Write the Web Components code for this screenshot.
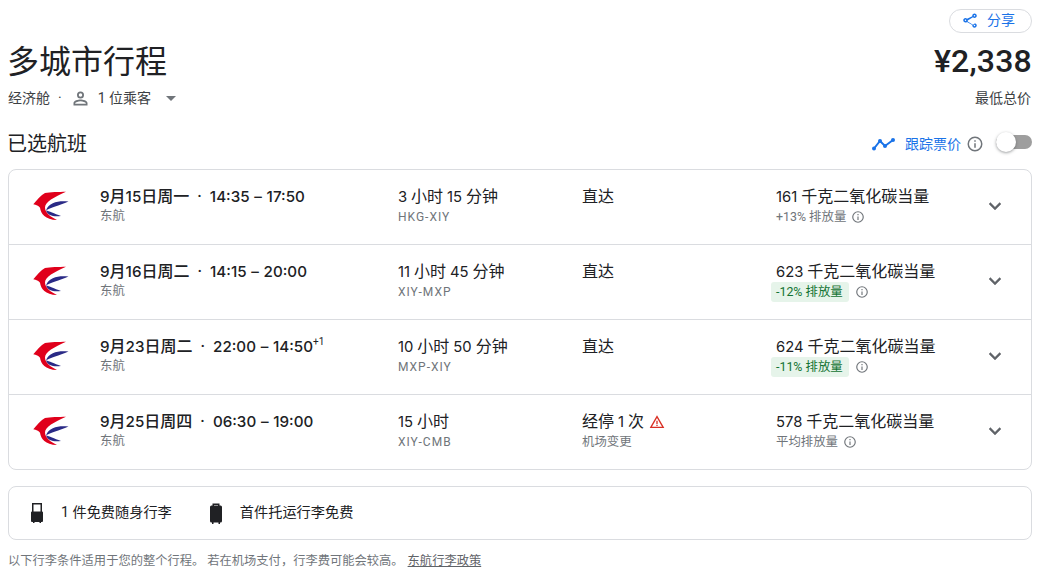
<!DOCTYPE html>
<html lang="zh-CN">
<head>
<meta charset="utf-8">
<title>多城市行程</title>
<style>
html,body{margin:0;padding:0;background:#fff;overflow:hidden}
body{font-family:Roboto,"Noto Sans CJK SC",sans-serif;color:#202124}
</style>
</head>
<body>
<trip-page>
  <trip-header></trip-header>
  <section-bar></section-bar>
  <flight-card>
    <flight-row date="9月15日周一" times="14:35 – 17:50" dur="3 小时 15 分钟" route="HKG-XIY" stops="直达" co2="161 千克二氧化碳当量" em="+13% 排放量"></flight-row>
    <flight-row date="9月16日周二" times="14:15 – 20:00" dur="11 小时 45 分钟" route="XIY-MXP" stops="直达" co2="623 千克二氧化碳当量" em="-12% 排放量" low></flight-row>
    <flight-row date="9月23日周二" times="22:00 – 14:50" plus="+1" dur="10 小时 50 分钟" route="MXP-XIY" stops="直达" co2="624 千克二氧化碳当量" em="-11% 排放量" low></flight-row>
    <flight-row date="9月25日周四" times="06:30 – 19:00" dur="15 小时" route="XIY-CMB" stops="经停 1 次" warn="机场变更" co2="578 千克二氧化碳当量" em="平均排放量"></flight-row>
  </flight-card>
  <baggage-box></baggage-box>
  <baggage-note></baggage-note>
</trip-page>
<script>
const INFO = s => `<svg width="${s}" height="${s}" viewBox="0 0 24 24" fill="#70757a"><path d="M11 7h2v2h-2zm0 4h2v6h-2zm1-9a10 10 0 1 0 0 20 10 10 0 0 0 0-20zm0 18a8 8 0 1 1 0-16 8 8 0 0 1 0 16z"/></svg>`;
const LOGO = `<svg width="36" height="30" viewBox="0 0 36 30">
<path fill="#e0001b" d="M33 .7C26 .9 17 1 12 2 8 4 4 9 .3 13.300 3 14 6 15 7 16.700 8 23 12 28.500 24 29 18 26 12 22 12 16.500 12 11 21 6 33 .7Z"/>
<path fill="#2a2a86" d="M35.500 10.500C27 9.500 16 10.500 13 19.500 17 17 26 14.500 35.500 10.500Z"/>
<path fill="#2a2a86" d="M13 19.500C16 20 21 22.500 28 25 21 26 15 25 13 19.500Z"/>
</svg>`;
const L = s => s.replace(/[0-9:+\-–%]+/g, m => `<span class="l">${m}</span>`);
function def(name, css, html){
  customElements.define(name, class extends HTMLElement{
    connectedCallback(){
      if(this.shadowRoot) return;
      this.attachShadow({mode:'open'}).innerHTML = `<style>${css}</style>` + (typeof html==='function'?html(this):html);
    }
  });
}
def('trip-page', `:host{display:block;width:1024px;padding:0 13px 0 8px;}`, `<slot></slot>`);
def('trip-header', `
:host{display:block;height:125px}
.wrap{display:flex;justify-content:space-between;height:100%}
.left{display:flex;flex-direction:column;padding-top:40px;margin-left:-1px}
h1{margin:0;font-weight:400;font-size:32px;line-height:44px;color:#202124}
.sub{display:flex;align-items:center;font-size:14px;line-height:20px;color:#3c4043;margin:4px 0 0 1px;height:20px}
.dot{margin:0 6px 0 8px}
.person{margin:0 7px 0 2px;display:block}
.arrow{margin-left:15px;width:0;height:0;border-left:5px solid transparent;border-right:5px solid transparent;border-top:5px solid #70757a;margin-top:1px}
.right{display:flex;flex-direction:column;align-items:flex-end;padding-top:9px}
.share{box-sizing:border-box;width:83px;height:24px;border:1px solid #dadce0;border-radius:12px;display:flex;align-items:center;color:#1a73e8;font-size:14px;line-height:20px;padding:0 0 2px 11px}
.share svg{margin-top:2px}
.share span{margin-left:8px}
.price{font-size:32px;line-height:38px;font-weight:500;margin-top:9px;color:#202124;letter-spacing:.2px}
.low{font-size:14px;line-height:20px;color:#3c4043;margin:8px 1px 0 0}
`, `<div class="wrap"><div class="left"><h1>多城市行程</h1>
<div class="sub"><span>经济舱</span><span class="dot">·</span>
<svg class="person" width="21" height="21" viewBox="0 0 24 24" fill="#70757a"><path d="M12 4a4 4 0 1 0 0 8 4 4 0 0 0 0-8zm0 6a2 2 0 1 1 0-4 2 2 0 0 1 0 4zm0 3c-2.700 0-8 1.300-8 4v3h16v-3c0-2.700-5.300-4-8-4zm6 5H6v-.990C6.200 16.300 9.300 15 12 15s5.800 1.300 6 2.010V18z"/></svg>
<span>1 位乘客</span><span class="arrow"></span></div></div>
<div class="right"><div class="share">
<svg width="18" height="18" viewBox="0 0 24 24" fill="#1a73e8"><path d="M18 16.100c-.8 0-1.500.3-2 .8l-7.100-4.200c.1-.2.100-.5.100-.7s0-.5-.1-.7L16 7.100c.5.500 1.200.9 2 .9 1.700 0 3-1.300 3-3s-1.300-3-3-3-3 1.300-3 3c0 .2 0 .5.100.7L8 8.900C7.500 8.400 6.800 8 6 8c-1.700 0-3 1.300-3 3s1.300 3 3 3c.8 0 1.500-.3 2-.8l7.100 4.200c-.1.200-.1.400-.1.600 0 1.600 1.300 2.900 3 2.900s3-1.300 3-2.900-1.300-2.900-3-2.900zM18 4c.6 0 1 .4 1 1s-.4 1-1 1-1-.4-1-1 .4-1 1-1zM6 12c-.6 0-1-.4-1-1s.4-1 1-1 1 .4 1 1-.4 1-1 1zm12 7c-.6 0-1-.4-1-1s.4-1 1-1 1 .4 1 1-.4 1-1 1z"/></svg>
<span>分享</span></div>
<div class="price">¥2,338</div><div class="low">最低总价</div></div></div>`);
def('section-bar', `
:host{display:flex;justify-content:space-between;align-items:center;height:38px;margin-bottom:6px}
h2{margin:0 0 0 -1px;font-weight:400;font-size:20px;line-height:38px;color:#202124}
.r{display:flex;align-items:center;color:#1a73e8;font-size:14px;line-height:20px}
.track{margin-right:10px;display:block}
.i{margin:0 12px 0 5px;display:block;height:18px}
.i svg{display:block}
.sw{position:relative;width:36px;height:14px;border-radius:7px;background:#9e9e9e;margin-top:-4px}
.knob{position:absolute;left:0;top:-3px;width:20px;height:20px;border-radius:50%;background:#fff;box-shadow:0 1px 3px rgba(60,64,67,.5)}
`, `<h2>已选航班</h2><div class="r">
<svg class="track" width="23" height="13" viewBox="0 0 23 13"><path d="M2 10.500 8 3 13 8 21 2" fill="none" stroke="#1a73e8" stroke-width="2"/><g fill="#1a73e8"><circle cx="2" cy="10.500" r="2"/><circle cx="8" cy="3" r="2"/><circle cx="13" cy="8" r="2"/><circle cx="21" cy="2" r="2"/></g></svg>
<span>跟踪票价</span><span class="i">${INFO(18)}</span><div class="sw"><div class="knob"></div></div></div>`);
def('flight-card', `
:host{display:block;border:1px solid #dadce0;border-radius:8px}
::slotted(flight-row:not(:last-child)){border-bottom:1px solid #dadce0}
::slotted(flight-row:last-child){height:74px}
`, `<slot></slot>`);
def('flight-row', `
:host{display:grid;box-sizing:border-box;height:75px;grid-template-columns:91px 298px 184px 194px 207px 1fr;align-items:start;padding-top:16px;color:#202124}
.logo{padding:5px 0 0 24px;height:30px}
.logo svg{display:block}
.main{font-size:16px;line-height:21px;margin-bottom:-1px;color:#202124;white-space:nowrap}
.l{font-family:Inter,Roboto,sans-serif;font-size:14.800px}
.when{font-weight:500}
.when .l{font-size:15.200px}
.times{word-spacing:.7px}
.sep{margin:0 8px}
sup{font-size:10px;line-height:0;vertical-align:7px;font-weight:400;font-family:Roboto,sans-serif}
.sub{font-size:12.400px;line-height:20px;color:#70757a;white-space:nowrap;display:flex;align-items:center}
.mono{letter-spacing:1px;font-size:12px}
.warn{display:inline-block;vertical-align:-3px;margin-left:5px}
.pill{background:#e6f4ea;color:#137333;border-radius:3px;padding:0 6px 0 5px;margin-left:-5px;height:20px;line-height:20px;}
.sub .ic{margin-left:5px;display:block}
.sub .ic svg{display:block}
.low .ic{margin-left:6px}
.chev{padding-top:8px}
.chev svg{display:block}
`, el => {
 const a = n => el.getAttribute(n);
 const warn = a('warn');
 const low = a('low')!==null;
 return `<div class="logo">${LOGO}</div>
<div><div class="main when">${L(a('date'))}<span class="sep">·</span><span class="times">${L(a('times'))}</span>${a('plus')?`<sup>${a('plus')}</sup>`:''}</div><div class="sub">东航</div></div>
<div><div class="main">${L(a('dur'))}</div><div class="sub mono">${a('route')}</div></div>
<div><div class="main">${L(a('stops'))}${warn?`<svg class="warn" width="16" height="16" viewBox="0 0 24 24" fill="#d93025"><path d="M12 5.990 19.530 19H4.470L12 5.990M12 2 1 21h22L12 2zm1 14h-2v2h2v-2zm0-6h-2v5h2v-5z"/></svg>`:''}</div>${warn?`<div class="sub">${warn}</div>`:''}</div>
<div><div class="main">${L(a('co2'))}</div><div class="sub ${low?'low':''}"><span class="${low?'pill':''}">${a('em')}</span><span class="ic">${INFO(14)}</span></div></div>
<div class="chev"><svg width="24" height="24" viewBox="0 0 24 24" fill="#5f6368" stroke="#5f6368" stroke-width=".4"><path d="M7.410 8.590 12 13.170l4.590-4.580L18 10l-6 6-6-6z"/></svg></div>`;
});
def('baggage-box', `
:host{display:flex;align-items:center;box-sizing:border-box;height:54px;margin-top:16px;border:1px solid #dadce0;border-radius:8px;padding-left:18px;font-size:14.200px;line-height:20px;color:#202124}
svg{display:block;margin-right:14px}
span{margin-top:-2px}
.a{margin-right:34px}
`, `<svg width="20" height="22" viewBox="0 0 20 22" fill="#202124"><path d="M5 1h10v9h-1.500V2.500h-7V10H5z"/><path d="M5 9.500h10a1 1 0 0 1 1 1V19a1 1 0 0 1-1 1H14v1h-1.500v-1h-5v1H6v-1H5a1 1 0 0 1-1-1v-8.500a1 1 0 0 1 1-1z"/></svg>
<span class="a">1 件免费随身行李</span>
<svg width="20" height="22" viewBox="0 0 20 22" fill="#202124"><path d="M6.500 1.500h7v3H12V3H8v1.500H6.500z"/><path d="M5.500 3.500h9A1.500 1.500 0 0 1 16 5v14a1.500 1.500 0 0 1-1.500 1.500H14V22h-1.500v-1.500h-5V22H6v-1.500h-.5A1.500 1.500 0 0 1 4 19V5a1.500 1.500 0 0 1 1.500-1.500z"/></svg>
<span>首件托运行李免费</span>`);
def('baggage-note', `
:host{display:block;margin-top:11px;font-size:12.280px;line-height:20px;color:#70757a;white-space:nowrap}
a{color:#5f6368;text-decoration:underline;margin-left:1px}
`, `以下行李条件适用于您的整个行程。 若在机场支付，行李费可能会较高。 <a>东航行李政策</a>`);
</script>
</body>
</html>
